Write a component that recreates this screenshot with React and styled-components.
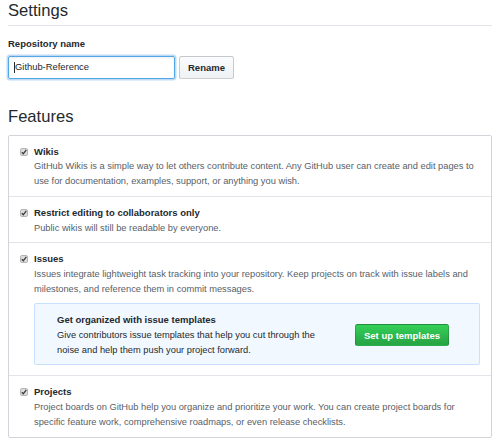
import React from 'react';
import styled, { createGlobalStyle } from 'styled-components';

const GlobalStyle = createGlobalStyle`
  body {
    margin: 0;
    background: #fff;
    font-family: "Liberation Sans", Arial, sans-serif;
    color: #24292e;
  }
`;

const features = [
  {
    title: 'Wikis',
    note: 'GitHub Wikis is a simple way to let others contribute content. Any GitHub user can create and edit pages to use for documentation, examples, support, or anything you wish.',
  },
  {
    title: 'Restrict editing to collaborators only',
    note: 'Public wikis will still be readable by everyone.',
  },
  {
    title: 'Issues',
    note: 'Issues integrate lightweight task tracking into your repository. Keep projects on track with issue labels and milestones, and reference them in commit messages.',
    promo: true,
  },
  {
    title: 'Projects',
    note: 'Project boards on GitHub help you organize and prioritize your work. You can create project boards for specific feature work, comprehensive roadmaps, or even release checklists.',
  },
];

const CheckMark = () => (
  <svg width="8" height="8" viewBox="0 0 8 8">
    <rect x="0.5" y="0.5" width="7" height="7" rx="1.5" fill="#dcdcdc" stroke="#b4b4b4" />
    <path d="M1.8 4.2 L3.3 5.8 L6.3 1.8" fill="none" stroke="#3a3a3a" strokeWidth="1.3" />
  </svg>
);

export default function App() {
  return (
    <Page>
      <GlobalStyle />
      <Heading>Settings</Heading>
      <Label>Repository name</Label>
      <RenameRow>
        <TextField>
          <Caret />
          Github-Reference
        </TextField>
        <Button>Rename</Button>
      </RenameRow>

      <SubHeading>Features</SubHeading>
      <Box>
        {features.map((f) => (
          <Row key={f.title}>
            <Check>
              <CheckMark />
            </Check>
            <Content>
              <Title>{f.title}</Title>
              <Note>{f.note}</Note>
              {f.promo && (
                <Promo>
                  <PromoText>
                    <PromoTitle>Get organized with issue templates</PromoTitle>
                    Give contributors issue templates that help you cut through the noise and help them push your project forward.
                  </PromoText>
                  <GreenButton>Set up templates</GreenButton>
                </Promo>
              )}
            </Content>
          </Row>
        ))}
      </Box>
    </Page>
  );
}

const Page = styled.div`
  padding: 0 9px 0 8px;
  font-size: 9.3px;
  line-height: 14.7px;
`;

const Heading = styled.h2`
  margin: 0;
  font-size: 16.6px;
  font-weight: 400;
  line-height: 21px;
  padding-bottom: 4px;
  border-bottom: 1px solid #e1e4e8;
`;

const SubHeading = styled(Heading)`
  margin-top: 27px;
  border-bottom: none;
  padding-bottom: 0;
  margin-bottom: 8px;
`;

const Label = styled.div`
  font-size: 9.5px;
  font-weight: 700;
  margin-top: 11px;
  margin-bottom: 4px;
`;

const RenameRow = styled.div`
  display: flex;
  gap: 4px;
  align-items: stretch;
`;

const TextField = styled.div`
  width: 167px;
  height: 23px;
  box-sizing: border-box;
  padding: 0 5px;
  display: flex;
  align-items: center;
  border: 1px solid #51a7e8;
  border-radius: 2px;
  box-shadow: inset 0 1px 2px rgba(27, 31, 35, 0.075), 0 0 0 1.5px rgba(3, 102, 214, 0.25);
  font-size: 9.4px;
  color: #24292e;
`;

const Caret = styled.span`
  width: 1px;
  height: 11px;
  background: #24292e;
`;

const Button = styled.button`
  font-family: inherit;
  font-size: 9.5px;
  font-weight: 700;
  color: #24292e;
  padding: 0 8px;
  height: 23px;
  border: 1px solid rgba(27, 31, 35, 0.2);
  border-radius: 2.5px;
  background: linear-gradient(-180deg, #fafbfc 0%, #eff3f6 90%);
`;

const Box = styled.div`
  border: 1px solid #d1d5da;
  border-radius: 2px;
`;

const Row = styled.div`
  display: flex;
  gap: 7px;
  padding: 9px 11px 7px;
  & + & {
    border-top: 1px solid #e1e4e8;
  }
`;

const Check = styled.div`
  flex: none;
  width: 7px;
  padding-top: 3px;
  line-height: 0;
`;

const Content = styled.div`
  flex: 1;
  min-width: 0;
`;

const Title = styled.div`
  font-size: 9.5px;
  font-weight: 700;
`;

const Note = styled.div`
  color: #586069;
`;

const Promo = styled.div`
  display: flex;
  align-items: center;
  margin: 7px 0 3px;
  padding: 9px 30px 7px 22px;
  background: #f1f8ff;
  border: 1px solid #c8e1ff;
  border-radius: 2px;
`;

const PromoText = styled.div`
  flex: 1;
  max-width: 275px;
  margin-right: auto;
`;

const PromoTitle = styled.div`
  font-size: 9.5px;
  font-weight: 700;
`;

const GreenButton = styled.button`
  flex: none;
  font-family: inherit;
  font-size: 9.5px;
  font-weight: 700;
  color: #fff;
  height: 22px;
  width: 94px;
  border: 1px solid rgba(27, 31, 35, 0.2);
  border-radius: 2.5px;
  background: linear-gradient(-180deg, #34d058 0%, #28a745 90%);
`;
